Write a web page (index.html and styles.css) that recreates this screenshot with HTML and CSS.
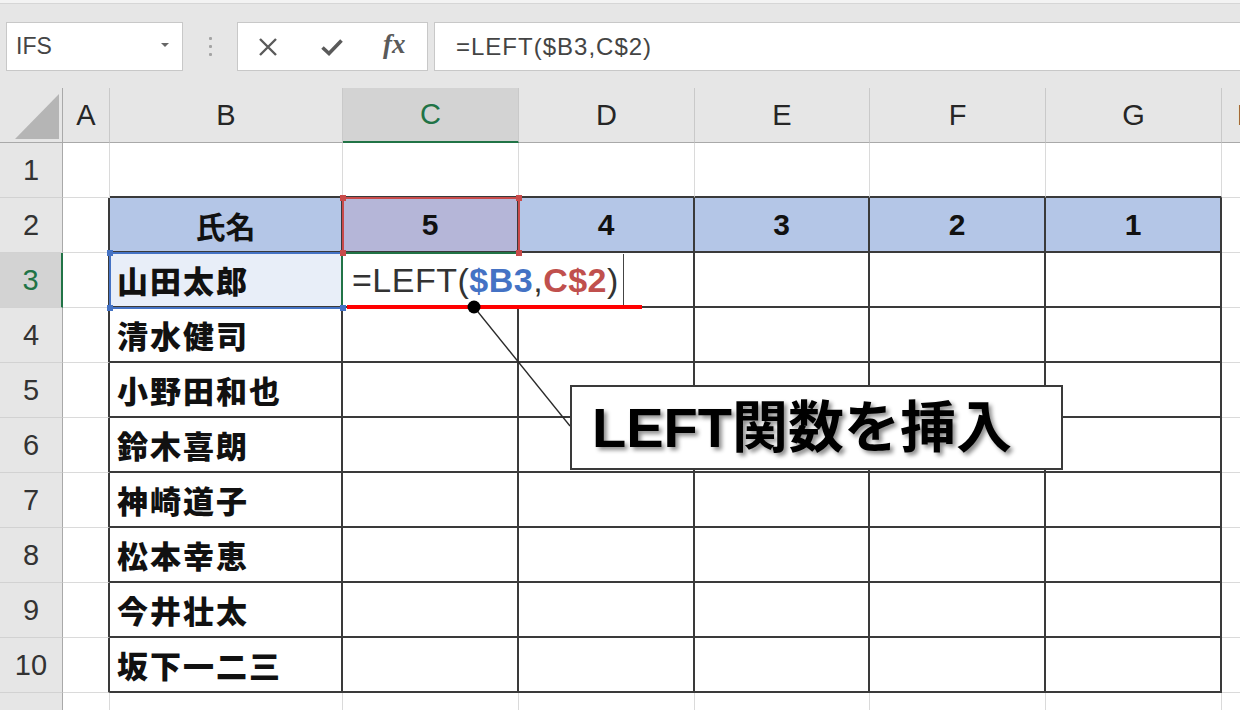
FILE: index.html
```html
<!DOCTYPE html>
<html lang="ja">
<head>
<meta charset="utf-8">
<title>Excel LEFT</title>
<link rel="stylesheet" href="styles.css">
</head>
<body>
<div class="app">
  <div class="topstrip"></div>
  <div class="toolbar">
    <div class="namebox"><span class="nbtext">IFS</span><span class="caret"></span></div>
    <div class="dots"><i></i><i></i><i></i></div>
    <div class="fbtns">
      <svg class="ico-x" width="20" height="18" viewBox="0 0 20 18"><path d="M2 1 L18 17 M18 1 L2 17" stroke="#5a5a5a" stroke-width="2.4" fill="none"/></svg>
      <svg class="ico-ok" width="22" height="18" viewBox="0 0 22 18"><path d="M1.5 9.5 L8 15.5 L20.5 2.5" stroke="#5a5a5a" stroke-width="3.6" fill="none" stroke-linejoin="miter"/></svg>
      <span class="fx">fx</span>
    </div>
    <div class="formula">=LEFT($B3,C$2)</div>
  </div>

  <div class="sheet">
    <!-- header -->
    <div class="c ch corner"></div>
    <div class="c ch">A</div>
    <div class="c ch">B</div>
    <div class="c ch sel">C</div>
    <div class="c ch">D</div>
    <div class="c ch">E</div>
    <div class="c ch">F</div>
    <div class="c ch">G</div>
    <div class="c ch">H</div>
    <div class="c ch"></div>
    <!-- row 1 -->
    <div class="c rh">1</div>
    <div class="c"></div>
    <div class="c r1t"></div><div class="c r1t"></div><div class="c r1t"></div><div class="c r1t"></div><div class="c r1t"></div><div class="c r1t"></div>
    <div class="c"></div><div class="c"></div>
    <!-- row 2 -->
    <div class="c rh">2</div>
    <div class="c ab"></div>
    <div class="c t hd">氏名</div>
    <div class="c t hd c2">5</div>
    <div class="c t hd">4</div>
    <div class="c t hd">3</div>
    <div class="c t hd">2</div>
    <div class="c t hd">1</div>
    <div class="c"></div><div class="c"></div>
    <!-- row 3 -->
    <div class="c rh sel">3</div>
    <div class="c ab"></div>
    <div class="c t nm b3">山田太郎</div>
    <div class="c t"></div><div class="c t"></div><div class="c t"></div><div class="c t"></div><div class="c t"></div>
    <div class="c"></div><div class="c"></div>
    <!-- row 4 -->
    <div class="c rh">4</div>
    <div class="c ab"></div>
    <div class="c t nm">清水健司</div>
    <div class="c t"></div><div class="c t"></div><div class="c t"></div><div class="c t"></div><div class="c t"></div>
    <div class="c"></div><div class="c"></div>
    <!-- row 5 -->
    <div class="c rh">5</div>
    <div class="c ab"></div>
    <div class="c t nm">小野田和也</div>
    <div class="c t"></div><div class="c t"></div><div class="c t"></div><div class="c t"></div><div class="c t"></div>
    <div class="c"></div><div class="c"></div>
    <!-- row 6 -->
    <div class="c rh">6</div>
    <div class="c ab"></div>
    <div class="c t nm">鈴木喜朗</div>
    <div class="c t"></div><div class="c t"></div><div class="c t"></div><div class="c t"></div><div class="c t"></div>
    <div class="c"></div><div class="c"></div>
    <!-- row 7 -->
    <div class="c rh">7</div>
    <div class="c ab"></div>
    <div class="c t nm">神崎道子</div>
    <div class="c t"></div><div class="c t"></div><div class="c t"></div><div class="c t"></div><div class="c t"></div>
    <div class="c"></div><div class="c"></div>
    <!-- row 8 -->
    <div class="c rh">8</div>
    <div class="c ab"></div>
    <div class="c t nm">松本幸恵</div>
    <div class="c t"></div><div class="c t"></div><div class="c t"></div><div class="c t"></div><div class="c t"></div>
    <div class="c"></div><div class="c"></div>
    <!-- row 9 -->
    <div class="c rh">9</div>
    <div class="c ab"></div>
    <div class="c t nm">今井壮太</div>
    <div class="c t"></div><div class="c t"></div><div class="c t"></div><div class="c t"></div><div class="c t"></div>
    <div class="c"></div><div class="c"></div>
    <!-- row 10 -->
    <div class="c rh">10</div>
    <div class="c ab"></div>
    <div class="c t nm">坂下一二三</div>
    <div class="c t"></div><div class="c t"></div><div class="c t"></div><div class="c t"></div><div class="c t"></div>
    <div class="c"></div><div class="c"></div>
    <!-- row 11 -->
    <div class="c rh">11</div>
    <div class="c"></div>
    <div class="c"></div><div class="c"></div><div class="c"></div><div class="c"></div><div class="c"></div><div class="c"></div>
    <div class="c"></div><div class="c"></div>
  </div>

  <!-- overlays -->
  <div class="sel-red"></div>
  <div class="sel-blue"></div>
  <div class="edit"><span class="eq">=LEFT(</span><span class="rb">$B3</span><span class="eq">,</span><span class="rr">C$2</span><span class="eq">)</span></div>
  <i class="hdl red h1"></i>
  <i class="hdl red h2"></i>
  <i class="hdl red h3"></i>
  <i class="hdl red h4"></i>
  <i class="hdl blue h5"></i>
  <i class="hdl blue h6"></i>
  <i class="hdl blue h7"></i>

  <svg class="marks" width="1240" height="710" viewBox="0 0 1240 710">
    <rect x="347" y="305" width="295" height="4" fill="#ff0000"/>
    <line x1="474" y1="307" x2="570" y2="426" stroke="#2a2a2a" stroke-width="1.3"/>
    <circle cx="474" cy="307" r="6.5" fill="#000"/>
  </svg>

  <div class="callout">LEFT関数を挿入</div>
</div>
</body>
</html>
```

FILE: styles.css
```css
html, body {
  margin: 0;
  padding: 0;
}
body {
  width: 1240px;
  height: 710px;
  overflow: hidden;
  background: #fff;
  font-family: "Liberation Sans", "Noto Sans CJK JP", sans-serif;
}
.app {
  position: relative;
  width: 1240px;
  height: 710px;
  overflow: hidden;
}
.topstrip {
  height: 3px;
  background: #f3f3f3;
  border-bottom: 1px solid #d6d6d6;
}
.toolbar {
  height: 84px;
  box-sizing: border-box;
  background: #e6e6e6;
  display: flex;
  align-items: flex-start;
  padding: 18px 0 0 6px;
  overflow: hidden;
}
.toolbar > * {
  flex-shrink: 0;
}
.namebox {
  width: 177px;
  height: 49px;
  box-sizing: border-box;
  background: #fff;
  border: 1px solid #c8c8c8;
  display: flex;
  align-items: center;
  justify-content: space-between;
  padding: 0 13px 0 9px;
}
.nbtext {
  font-size: 23px;
  color: #454545;
}
.caret {
  width: 0;
  height: 0;
  border-left: 4px solid transparent;
  border-right: 4px solid transparent;
  border-top: 4px solid #666;
  margin-top: -4px;
}
.dots {
  width: 54px;
  height: 49px;
  box-sizing: border-box;
  display: flex;
  flex-direction: column;
  align-items: center;
  gap: 5px;
  padding-top: 15px;
}
.dots i {
  display: block;
  width: 3px;
  height: 3px;
  background: #a4a4a4;
  border-radius: 1px;
}
.fbtns {
  width: 191px;
  height: 49px;
  box-sizing: border-box;
  background: #fff;
  border: 1px solid #c8c8c8;
  display: flex;
  align-items: center;
  padding-left: 20px;
}
.ico-x {
  display: block;
}
.ico-ok {
  display: block;
  margin-left: 43px;
}
.fx {
  margin-left: 40px;
  font-family: "Liberation Serif", serif;
  font-style: italic;
  font-weight: bold;
  font-size: 27px;
  color: #5a5a5a;
  margin-top: -4px;
}
.formula {
  margin-left: 6px;
  width: 820px;
  height: 49px;
  box-sizing: border-box;
  background: #fff;
  border: 1px solid #c8c8c8;
  border-right: none;
  padding-left: 21px;
  display: flex;
  align-items: center;
  font-size: 24px;
  letter-spacing: 1px;
  color: #444;
}

/* sheet grid */
.sheet {
  display: grid;
  grid-template-columns: 63px 47px 233px 176px 176px 175px 176px 176px 52px 100px;
  grid-auto-rows: 55px;
}
.c {
  box-sizing: border-box;
  border-right: 1px solid #dadada;
  border-bottom: 1px solid #dadada;
  display: flex;
  align-items: center;
  overflow: hidden;
  white-space: nowrap;
}
.ch {
  background: #e6e6e6;
  border-right-color: #c9c9c9;
  border-bottom-color: #a9a9a9;
  justify-content: center;
  font-size: 29px;
  color: #262626;
}
.corner {
  position: relative;
  border-right-color: #a9a9a9;
}
.corner::after {
  content: "";
  position: absolute;
  left: 15px;
  top: 6px;
  width: 44px;
  height: 45px;
  background: #b5b5b5;
  clip-path: polygon(100% 0, 100% 100%, 0 100%);
}
.rh {
  background: #e6e6e6;
  border-right-color: #a9a9a9;
  border-bottom-color: #d2d2d2;
  justify-content: center;
  font-size: 29px;
  color: #333;
}
.ch.sel {
  background: #d3d3d3;
  color: #217346;
  border-bottom: 2px solid #217346;
}
.rh.sel {
  background: #d3d3d3;
  color: #217346;
  border-right: 2px solid #217346;
}
.r1t {
  border-bottom: 2px solid #3a3a3a;
}
.ab {
  border-right: 2px solid #3a3a3a;
}
.t {
  border-right: 2px solid #3a3a3a;
  border-bottom: 2px solid #3a3a3a;
}
.hd {
  background: #b4c6e7;
  justify-content: center;
  font-weight: bold;
  font-size: 30px;
  color: #111;
}
.hd.c2 {
  background: #b5b6d8;
}
.nm {
  font-family: "Noto Sans CJK JP", sans-serif;
  font-weight: 900;
  font-size: 31px;
  letter-spacing: 2px;
  padding-left: 7px;
  color: #111;
}
.b3 {
  background: #e8eef8;
}

/* overlays */
.sel-red {
  position: absolute;
  left: 342px;
  top: 197px;
  width: 178px;
  height: 57px;
  box-sizing: border-box;
  border: 2px solid #c84a4a;
  border-bottom-color: #217346;
}
.sel-blue {
  position: absolute;
  left: 109px;
  top: 252px;
  width: 234px;
  height: 57px;
  box-sizing: border-box;
  border: 2px solid #4472c4;
  border-right: none;
}
.edit {
  position: absolute;
  left: 341px;
  top: 254px;
  width: 283px;
  height: 52px;
  box-sizing: border-box;
  background: #fff;
  border-left: 2px solid #217346;
  border-right: 1px solid #444;
  padding-left: 9px;
  display: flex;
  align-items: center;
  font-size: 34px;
  letter-spacing: 0.5px;
  white-space: nowrap;
}
.eq {
  color: #333;
}
.rb {
  color: #4472c4;
  font-weight: bold;
}
.rr {
  color: #c0504d;
  font-weight: bold;
}
.hdl {
  position: absolute;
  width: 6px;
  height: 6px;
  display: block;
}
.hdl.red {
  background: #c84a4a;
}
.hdl.blue {
  background: #4472c4;
}
.h1 { left: 340px; top: 195px; }
.h2 { left: 516px; top: 195px; }
.h3 { left: 340px; top: 250px; }
.h4 { left: 516px; top: 250px; }
.h5 { left: 107px; top: 250px; }
.h6 { left: 107px; top: 305px; }
.h7 { left: 340px; top: 305px; }

.marks {
  position: absolute;
  left: 0;
  top: 0;
  pointer-events: none;
}
.callout {
  position: absolute;
  left: 570px;
  top: 385px;
  width: 493px;
  height: 85px;
  box-sizing: border-box;
  border: 2px solid #3a3a3a;
  background: #fff;
  display: flex;
  align-items: center;
  padding-left: 20px;
  font-size: 56px;
  font-weight: bold;
  color: #000;
  line-height: 1;
  white-space: nowrap;
  text-shadow: 3px 3px 4px rgba(0, 0, 0, 0.45);
}
```
